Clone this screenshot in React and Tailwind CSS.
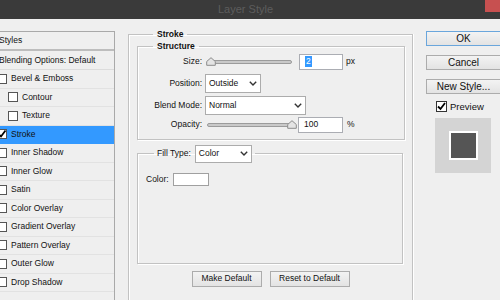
import React from "react";

function Check({ checked = false, className = "" }) {
  return (
    <div className={"w-[10px] h-[10px] bg-white border border-[#555] flex-none relative " + className}>
      {checked && (
        <svg width="10" height="10" viewBox="0 0 10 10" className="absolute left-[-1px] top-[-1px]">
          <polyline points="1.5,5 4,7.5 8.5,1.5" fill="none" stroke="#000" strokeWidth="1.8" />
        </svg>
      )}
    </div>
  );
}

function Chevron() {
  return (
    <svg width="8" height="5" viewBox="0 0 8 5" className="flex-none">
      <polyline points="0.8,0.8 4,4 7.2,0.8" fill="none" stroke="#333" strokeWidth="1.4" />
    </svg>
  );
}

function Select({ value, w }) {
  return (
    <div className={"h-full bg-white border border-[#acacac] flex items-center justify-between pl-[3px] pr-[3px] " + w}>
      <span>{value}</span>
      <Chevron />
    </div>
  );
}

function Thumb() {
  return (
    <svg width="10" height="9" viewBox="0 0 10 9">
      <path d="M5 0.7 L9.3 4.5 L9.3 8.3 L0.7 8.3 L0.7 4.5 Z" fill="#e4e4e4" stroke="#8c8c8c" strokeWidth="1" />
    </svg>
  );
}

function Slider({ at }) {
  return (
    <div className="relative w-[90px] h-full flex items-center">
      <div className="ml-[1px] w-[85px] h-[4px] rounded-full bg-[#c9c9c9] border border-[#9b9b9b]" />
      {at === "left" ? (
        <div className="absolute left-0 top-[3px]">
          <Thumb />
        </div>
      ) : (
        <div className="absolute left-[81px] top-[3px]">
          <Thumb />
        </div>
      )}
    </div>
  );
}

function Btn({ children, w, h = "h-[16px]", border = "border-[#acacac]", text = "" }) {
  return (
    <div
      className={
        "flex items-center justify-center border bg-gradient-to-b from-[#f3f3f3] to-[#e3e3e3] " + w + " " + h + " " + border + " " + text
      }
    >
      {children}
    </div>
  );
}

const listItems = [
  { label: "Bevel & Emboss" },
  { label: "Contour", nested: true },
  { label: "Texture", nested: true },
  { label: "Stroke", checked: true, selected: true },
  { label: "Inner Shadow" },
  { label: "Inner Glow" },
  { label: "Satin" },
  { label: "Color Overlay" },
  { label: "Gradient Overlay" },
  { label: "Pattern Overlay" },
  { label: "Outer Glow" },
  { label: "Drop Shadow" },
];

export default function App() {
  return (
    <div className="w-[500px] h-[300px] overflow-hidden bg-[#efefef] text-[8.5px] leading-[11px] text-[#111] font-['Liberation_Sans',Arial,sans-serif]">
      {/* Title bar */}
      <div className="relative h-[19px] bg-[#3a3a3a] flex items-center justify-center pr-[9px]">
        <span className="text-[11px] leading-[13px] text-[#5d5d5d]">Layer Style</span>
        <div className="absolute right-0 top-0 w-[15px] h-[12px] bg-[#c75050]" />
      </div>

      <div className="flex">
        {/* Left styles panel */}
        <div className="mt-[12px] w-[115px] h-[300px] flex-none border-t border-r border-[#a9a9a9] overflow-hidden">
          <div className="h-[17px] flex items-center pl-0 ml-[-1px]">Styles</div>
          <div className="h-[2px] bg-[#bdbdbd]" />
          <div className="h-[19px] flex items-center ml-[-1px] border-b border-[#dcdcdc]">Blending Options: Default</div>
          {listItems.map((it) => (
            <div
              key={it.label}
              className={
                "h-[18.5px] flex items-center border-b " +
                (it.selected ? "bg-[#3399ff] border-[#3399ff]" : "border-[#e2e2e2]")
              }
            >
              <Check checked={it.checked} className={it.nested ? "ml-[8px]" : "ml-[-3px]"} />
              <span className="ml-[4px]">{it.label}</span>
            </div>
          ))}
        </div>

        {/* Main area */}
        <fieldset className="ml-[13px] mt-[10px] w-[285px] h-[300px] flex-none border border-[#c2c2c2] pl-[8px] pr-[7px] shadow-[inset_1px_1px_0_#fff,1px_0_0_#fff]">
          <legend className="ml-[16px] px-[4px] font-bold leading-[11px]">Stroke</legend>

          <fieldset className="mt-[1px] w-[268px] border border-[#c2c2c2] pb-[6px] shadow-[inset_1px_1px_0_#fff,1px_1px_0_#fff]">
            <legend className="ml-[15px] px-[4px] font-bold leading-[11px]">Structure</legend>

            <div className="mt-[1.5px] h-[16px] flex items-center">
              <div className="w-[64px] text-right">Size:</div>
              <div className="ml-[4px] h-full">
                <Slider at="left" />
              </div>
              <div className="ml-[3px] w-[44px] h-[16px] bg-white border border-[#abadb3] flex items-center pl-[5px]">
                <span className="bg-[#3399ff] text-white px-[1px]">2</span>
              </div>
              <span className="ml-[3px]">px</span>
            </div>

            <div className="mt-[4px] h-[19px] flex items-center">
              <div className="w-[64px] text-right">Position:</div>
              <div className="ml-[3px] h-full">
                <Select value="Outside" w="w-[56px]" />
              </div>
            </div>

            <div className="mt-[3px] h-[19px] flex items-center">
              <div className="w-[64px] text-right">Blend Mode:</div>
              <div className="ml-[3px] h-full">
                <Select value="Normal" w="w-[101px]" />
              </div>
            </div>

            <div className="mt-[2px] h-[16px] flex items-center">
              <div className="w-[64px] text-right">Opacity:</div>
              <div className="ml-[4px] h-full">
                <Slider at="right" />
              </div>
              <div className="ml-[2px] w-[45px] h-[16px] bg-white border border-[#abadb3] flex items-center pl-[5px]">
                100
              </div>
              <span className="ml-[4px]">%</span>
            </div>
          </fieldset>

          <fieldset className="mt-[5px] w-[266px] h-[119px] border border-[#c2c2c2] shadow-[inset_1px_1px_0_#fff,1px_1px_0_#fff]">
            <legend className="ml-[16px] px-[3px] flex items-center h-[18px]">
              <span>Fill Type:</span>
              <div className="ml-[4px] h-[18px]">
                <Select value="Color" w="w-[57px]" />
              </div>
            </legend>
            <div className="mt-[10px] h-[13px] flex items-center pl-[8px]">
              <span>Color:</span>
              <div className="ml-[4px] w-[36px] h-[13px] bg-white border border-[#a0a0a0]" />
            </div>
          </fieldset>

          <div className="mt-[7px] flex justify-center gap-[8px] pr-[1px]">
            <Btn w="w-[70px]">Make Default</Btn>
            <Btn w="w-[80px]">Reset to Default</Btn>
          </div>
        </fieldset>

        {/* Right column */}
        <div className="ml-[13px] mt-[12px] flex-none flex flex-col text-[10px] leading-[12px]">
          <Btn w="w-[75px]" h="h-[15px]" border="border-[#6aa6dc]">OK</Btn>
          <div className="mt-[9px]">
            <Btn w="w-[75px]" h="h-[15px]">Cancel</Btn>
          </div>
          <div className="mt-[9px]">
            <Btn w="w-[75px]" h="h-[15px]">New Style...</Btn>
          </div>
          <div className="mt-[7px] ml-[10px] h-[11px] flex items-center text-[9.5px]">
            <div className="w-[11px] h-[11px] bg-white border border-[#333] relative flex-none">
              <svg width="11" height="11" viewBox="0 0 11 11" className="absolute left-[-1px] top-[-1px]">
                <polyline points="2,5.5 4.5,8 9,2" fill="none" stroke="#000" strokeWidth="1.8" />
              </svg>
            </div>
            <span className="ml-[3px]">Preview</span>
          </div>
          <div className="mt-[6px] ml-[9px] w-[56px] h-[55px] bg-[#d4d4d4] flex items-center justify-center">
            <div className="w-[29px] h-[29px] bg-[#555555] border-2 border-white" />
          </div>
        </div>
      </div>
    </div>
  );
}
